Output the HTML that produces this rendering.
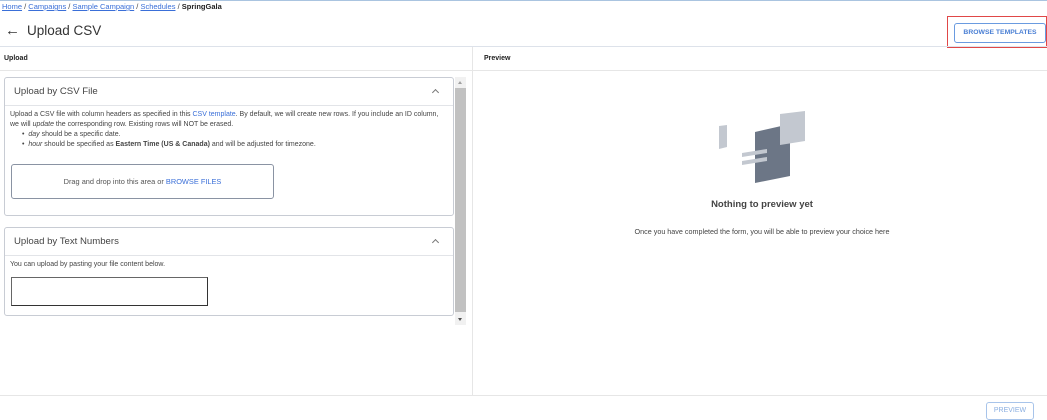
<!DOCTYPE html>
<html><head><style>
*{box-sizing:border-box;margin:0;padding:0}
body{width:1047px;height:419px;overflow:hidden;background:#fff;font-family:"Liberation Sans",sans-serif;color:#333;position:relative}
.a{position:absolute}
a{color:#3a6fd8;text-decoration:underline}
.bc{left:2px;top:2px;font-size:7.5px;color:#444}
.card{position:absolute;left:4px;width:450px;border:1px solid #c8ccd4;border-radius:3px;background:#fff}
.ch{height:28px;border-bottom:1px solid #e2e4e8;font-size:9.6px;color:#444;padding:8px 0 0 9px;position:relative}
.chev{position:absolute;right:15px;top:12px;width:5px;height:5px;border-left:1px solid #777;border-top:1px solid #777;transform:rotate(45deg)}
.t{font-size:7px;color:#444;line-height:10px}
</style></head><body>
<div class="a" style="left:0;top:0;width:1047px;height:1px;background:#aac4e0"></div>
<div class="a bc"><a>Home</a> / <a>Campaigns</a> / <a>Sample Campaign</a> / <a>Schedules</a> / <b style="color:#222">SpringGala</b></div>
<div class="a" style="left:5px;top:22px;font-size:15px;color:#333">&#8592;</div>
<div class="a" style="left:27px;top:23px;font-size:13.5px;color:#333">Upload CSV</div>
<div class="a" style="left:947px;top:16px;width:100px;height:32px;border:1.5px solid #e04848"></div>
<div class="a" style="left:954px;top:23px;width:92px;height:20px;border:1px solid #6a9be0;border-radius:3px;font-size:6.8px;font-weight:bold;color:#4a7fd4;text-align:center;line-height:18px">BROWSE TEMPLATES</div>
<div class="a" style="left:0;top:46px;width:1047px;height:1px;background:#dde2ea"></div>
<div class="a" style="left:4px;top:55px;font-size:7px;font-weight:bold;color:#222">Upload</div>
<div class="a" style="left:484px;top:55px;font-size:7px;font-weight:bold;color:#222">Preview</div>
<div class="a" style="left:0;top:70px;width:1047px;height:1px;background:#e6e6e6"></div>
<div class="a" style="left:472px;top:47px;width:1px;height:348px;background:#e6e6e6"></div>
<div class="a" style="left:0;top:395px;width:1047px;height:1px;background:#e6e6e6"></div>
<div class="a" style="left:986px;top:402px;width:48px;height:18px;border:1px solid #a8c4ea;border-radius:3px;font-size:7px;color:#8aaee0;text-align:center;line-height:16px">PREVIEW</div>

<div class="card" style="top:77px;height:139px">
<div class="ch">Upload by CSV File<div class="chev"></div></div>
<div class="t" style="padding:4px 5px;width:445px">Upload a CSV file with column headers as specified in this <span style="color:#3a6fd8">CSV template</span>. By default, we will create new rows. If you include an ID column, we will <i>update</i> the corresponding row. Existing rows will NOT be erased.
<div style="padding-left:12px">&bull;&nbsp; <i>day</i> should be a specific date.</div>
<div style="padding-left:12px">&bull;&nbsp; <i>hour</i> should be specified as <b>Eastern Time (US &amp; Canada)</b> and will be adjusted for timezone.</div></div>
<div class="a" style="left:6px;top:86px;width:263px;height:35px;border:1px solid #8a93a3;border-radius:3px;text-align:center;line-height:33px;font-size:7.4px;color:#555">Drag and drop into this area or <span style="color:#3a6fd8">BROWSE FILES</span></div>
</div>
<div class="card" style="top:227px;height:89px">
<div class="ch">Upload by Text Numbers<div class="chev"></div></div>
<div class="t" style="padding:4px 5px">You can upload by pasting your file content below.</div>
<div class="a" style="left:6px;top:49px;width:197px;height:29px;border:1px solid #333;border-top-color:#666;border-left-color:#666"></div>
</div>
<div class="a" style="left:455px;top:77px;width:11px;height:248px;background:#f1f1f1"></div>
<div class="a" style="left:455px;top:88px;width:11px;height:224px;background:#c1c1c1"></div>
<div class="a" style="left:458px;top:81px;border:2.5px solid transparent;border-bottom:3px solid #a0a0a0;border-top:0"></div>
<div class="a" style="left:458px;top:318px;border:2.5px solid transparent;border-top:3px solid #505050;border-bottom:0"></div>

<svg class="a" style="left:715px;top:108px" width="95" height="80">
<polygon points="4,18 12,17 12,39 4,41" fill="#c3c8d0"/>
<polygon points="40,24 75,16 75,68 40,75" fill="#6c7686"/>
<polygon points="65,6 90,3 90,33 65,37" fill="#c3c8d0"/>
<polygon points="27,45 52,41 52,45 27,49" fill="#c3c8d0"/>
<polygon points="27,53 52,49 52,53 27,57" fill="#c3c8d0"/>
</svg>
<div class="a" style="left:662px;top:199px;width:200px;text-align:center;font-size:9.5px;font-weight:bold;color:#444">Nothing to preview yet</div>
<div class="a" style="left:562px;top:227px;width:400px;text-align:center;font-size:7.2px;color:#444">Once you have completed the form, you will be able to preview your choice here</div>
</body></html>
